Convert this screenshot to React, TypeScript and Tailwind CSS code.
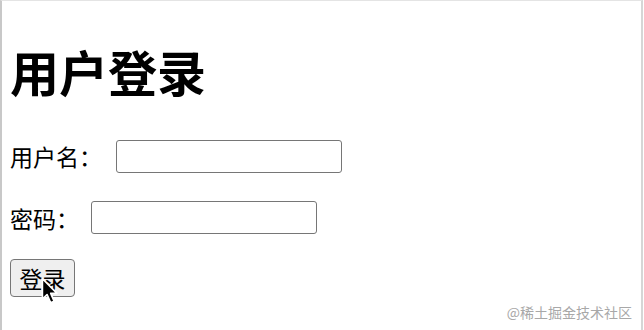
const cjk = "font-['Noto_Sans_CJK_SC','Noto_Sans',sans-serif]";

const Cursor = () => (
	<svg
		className="absolute left-[40px] top-[277px]"
		width="20"
		height="28"
		viewBox="0 0 16 24"
	>
		<path
			d="M1.5 1.5 L1.5 19 L5.5 15 L8.5 22 L11.5 20.7 L8.6 14 L14 14 Z"
			fill="#000"
			stroke="#fff"
			strokeWidth="1.4"
			strokeLinejoin="round"
		/>
	</svg>
);

const App = () => {
	return (
		<div className={`relative h-[330px] w-[644px] overflow-hidden bg-white ${cjk}`}>
			<div className="h-[330px] w-[643px] border-x-2 border-t border-l-[#c8c8c8] border-r-[#d6d6d6] border-t-[#e4e4e4] pl-[8px]">
				<h1 className="mt-[45px] text-[49px] font-bold leading-none text-black">用户登录</h1>
				<div className="mt-[44px] flex items-center gap-[14px] text-[23px] text-black">
					<label>用户名：</label>
					<input
						type="text"
						className="h-[33px] w-[226px] rounded-[3px] border border-[#767676] bg-white"
					/>
				</div>
				<div className="mt-[27px] flex items-center gap-[12px] text-[23px] text-black">
					<label>密码：</label>
					<input
						type="password"
						className="h-[33px] w-[226px] rounded-[3px] border border-[#767676] bg-white"
					/>
				</div>
				<button className="mt-[24px] h-[38px] w-[65px] rounded-[4px] border border-[#767676] bg-[#efefef] text-[23px] leading-none text-black">
					登录
				</button>
			</div>
			<span className="absolute right-[12px] top-[302px] text-[14px] text-[#a8a8a8]">
				@稀土掘金技术社区
			</span>
			<Cursor />
		</div>
	);
};

export default App;
